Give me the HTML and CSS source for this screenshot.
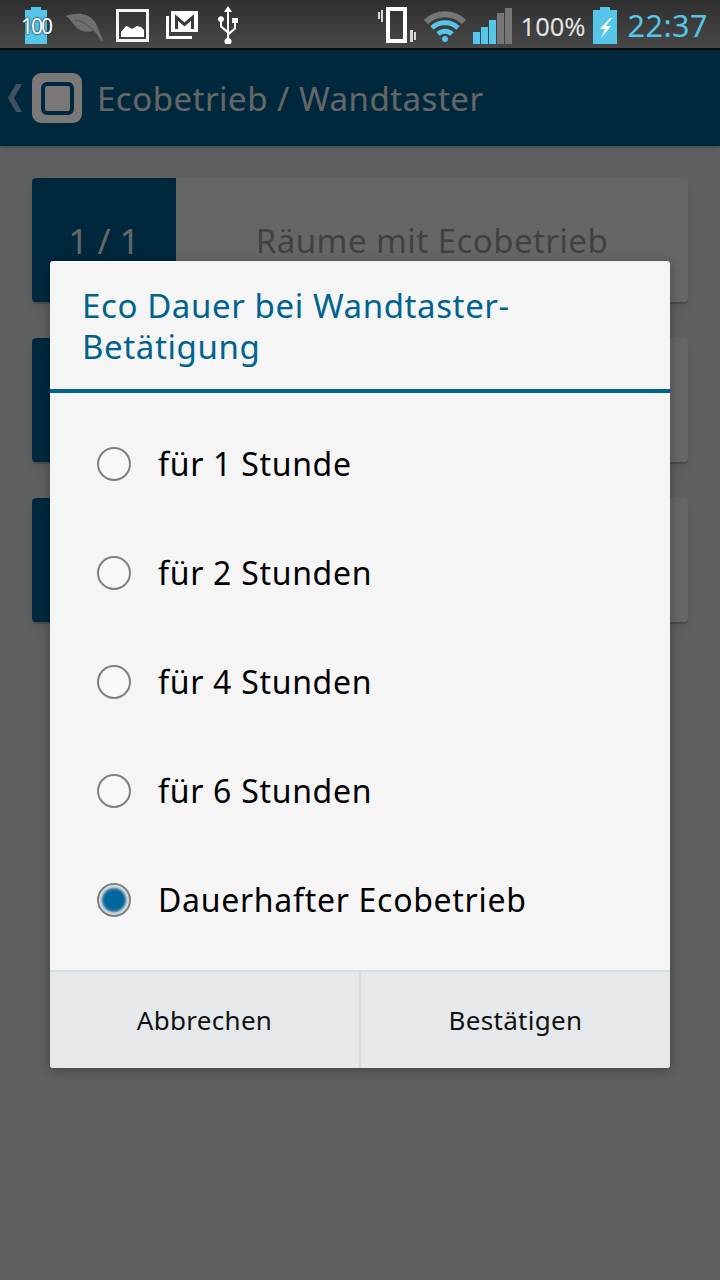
FILE: index.html
```html
<!DOCTYPE html>
<html lang="de">
<head>
    <meta charset="UTF-8">
    <meta name="viewport" content="width=device-width, initial-scale=1.0">
    <title>Ecobetrieb / Wandtaster</title>
    <link rel="stylesheet" href="styles.css">
</head>
<body>
    <div class="status-bar">
        <div class="status-left">
            <svg class="ic-batt100" width="24" height="37" viewBox="0 0 24 37">
                <path d="M7 0h10v3h6v34H1V3h6z" fill="#55c6e8"/>
            </svg>
            <span class="batt-label">100</span>
            <svg class="ic-leaf" width="37" height="28" viewBox="0 0 37 28">
                <path d="M0 3C10-1 23 0 29 9c2 4 4 9 8 18l-2 1c-2-4-4-7-7-10-8 2-15 0-19-5C6 9 4 6 0 3z" fill="#6e6e6e"/>
                <path d="M9 7c7 1 13 5 19 11" fill="none" stroke="#4a4a4a" stroke-width="1"/>
            </svg>
            <svg class="ic-image" width="33" height="33" viewBox="0 0 33 33">
                <rect x="1.500" y="1.500" width="30" height="30" fill="none" stroke="#f4f4f4" stroke-width="3"/>
                <path d="M5 28v-5l5-6 3 1 3 2 5-3 4 1 3 3v7z" fill="#fff"/>
            </svg>
            <svg class="ic-mail" width="33" height="28" viewBox="0 0 33 28">
                <path d="M1 5h3v20h23v3H1z" fill="#fff"/>
                <path d="M6 0h27v21H6z" fill="#fff"/>
                <path d="M11.500 18V6.500l8 7 8-7V18" fill="none" stroke="#3a3a3a" stroke-width="3"/>
            </svg>
            <svg class="ic-usb" width="20" height="38" viewBox="0 0 20 38">
                <path d="M10 0l4 6h-3v20l5-4v-5h-2v-5h6v5h-2v6l-7 6v3a3.500 3.500 0 1 1-2 0v-5l-7-6v-5a3 3 0 1 1 2 0v4l5 4V6H6z" fill="#fff"/>
            </svg>
        </div>
        <div class="status-right">
            <svg class="ic-vibrate" width="38" height="36" viewBox="0 0 38 36">
                <path d="M10 2h17v32H10z" fill="none" stroke="#fff" stroke-width="4"/>
                <path d="M0 5h2v7H0zM3 3h2v12H3zM32 23h3v12h-3zM36 25h2v8h-2z" fill="#d8d8d8"/>
            </svg>
            <svg class="ic-wifi" width="44" height="33" viewBox="0 0 44 33">
                <path d="M3 13a27 27 0 0 1 38 0" fill="none" stroke="#767676" stroke-width="6"/>
                <path d="M9 19a19 19 0 0 1 26 0" fill="none" stroke="#55c6e8" stroke-width="5"/>
                <path d="M15 25a10 10 0 0 1 14 0" fill="none" stroke="#55c6e8" stroke-width="5"/>
                <circle cx="22" cy="30" r="3" fill="#55c6e8"/>
            </svg>
            <div class="signal">
                <i class="bar on b1"></i><i class="bar on b2"></i><i class="bar on b3"></i><i class="bar b4"></i><i class="bar b5"></i>
            </div>
            <span class="percent">100%</span>
            <svg class="ic-batt" width="24" height="37" viewBox="0 0 24 37">
                <path d="M7 0h10v3h7v34H0V3h7z" fill="#55c6e8"/>
                <path d="M17 11L7 22h5l-4 9 10-12h-5l6-8z" fill="#fff"/>
            </svg>
            <span class="clock">22:37</span>
        </div>
    </div>

    <div class="screen">
        <div class="app-header">
            <svg class="back" width="14" height="28" viewBox="0 0 14 28">
                <path d="M14 0L6 14l8 14H8L0 14 8 0z" fill="#96cdf0"/>
            </svg>
            <div class="logo"><div class="logo-inner"></div></div>
            <h1>Ecobetrieb / Wandtaster</h1>
        </div>

        <div class="content">
            <div class="card">
                <div class="card-num">1 / 1</div>
                <div class="card-text">Räume mit Ecobetrieb</div>
            </div>
            <div class="card">
                <div class="card-num"></div>
                <div class="card-text"></div>
            </div>
            <div class="card">
                <div class="card-num"></div>
                <div class="card-text"></div>
            </div>
        </div>

        <div class="overlay"></div>

        <div class="dialog">
            <h2>Eco Dauer bei Wandtaster-<br>Betätigung</h2>
            <div class="options">
                <div class="option"><span class="radio"></span>für 1 Stunde</div>
                <div class="option"><span class="radio"></span>für 2 Stunden</div>
                <div class="option"><span class="radio"></span>für 4 Stunden</div>
                <div class="option"><span class="radio"></span>für 6 Stunden</div>
                <div class="option"><span class="radio checked"></span>Dauerhafter Ecobetrieb</div>
            </div>
            <div class="buttons">
                <button type="button">Abbrechen</button>
                <button type="button">Bestätigen</button>
            </div>
        </div>
    </div>
</body>
</html>
```

FILE: styles.css
```css
* {
    box-sizing: border-box;
}
html, body {
    margin: 0;
    height: 100%;
}
body {
    font-family: 'Noto Sans', 'Open Sans', sans-serif;
    background: #e6f0ee;
    overflow: hidden;
}
.status-bar {
    height: 50px;
    background: linear-gradient(#2f2f2f, #474747);
    border-bottom: 2px solid #0c0c0c;
    display: flex;
    justify-content: space-between;
    align-items: center;
    padding: 2px 12px 0 24px;
    position: relative;
}
.status-left, .status-right {
    display: flex;
    align-items: center;
}
.ic-batt100 {
    margin-right: 18px;
}
.ic-leaf {
    margin-top: 3px;
    margin-right: 13px;
}
.ic-image {
    margin-right: 16px;
}
.ic-mail {
    margin-right: 20px;
}
.batt-label {
    position: absolute;
    left: 20px;
    top: 12px;
    width: 32px;
    text-align: center;
    font-size: 21px;
    letter-spacing: -2px;
    color: #fff;
    text-shadow: 0 0 2px #1c3c48, 0 0 2px #1c3c48;
}
.ic-vibrate {
    margin-right: 7px;
}
.ic-wifi {
    margin-right: 6px;
}
.signal {
    display: flex;
    align-items: flex-end;
    gap: 1px;
    height: 36px;
    margin-top: 2px;
}
.bar {
    width: 7px;
    background: #767676;
}
.bar.on {
    background: #55c6e8;
}
.b1 { height: 12px; }
.b2 { height: 17px; }
.b3 { height: 24px; }
.b4 { height: 31px; }
.b5 { height: 36px; }
.percent {
    color: #e4e4e4;
    font-size: 25.500px;
    margin-left: 9px;
    margin-right: 7px;
    position: relative;
    top: 1px;
}
.clock {
    color: #55c6e8;
    font-size: 30.500px;
    margin-left: 11px;
    letter-spacing: 0.5px;
}
.screen {
    position: relative;
    height: 1230px;
}
.app-header {
    height: 96px;
    background: #00659a;
    box-shadow: 0 1px 3px rgba(0,0,0,0.3);
    display: flex;
    align-items: center;
    padding-left: 8px;
}
/* the logo stays lighter than the dim layer would make it */
.logo {
    width: 50px;
    height: 50px;
    margin-left: 10px;
    background: #7b7977;
    border-radius: 9px;
    display: flex;
    align-items: center;
    justify-content: center;
    position: relative;
    z-index: 1;
}
.logo-inner {
    width: 33px;
    height: 33px;
    background: #7b7977;
    border: 4px solid #002840;
    border-radius: 6px;
}
.app-header h1 {
    margin: 0 0 0 15px;
    font-size: 33px;
    font-weight: 400;
    letter-spacing: 0.500px;
    color: #fff;
}
.content {
    padding: 32px 32px 0;
    display: flex;
    flex-direction: column;
    gap: 36px;
}
.card {
    height: 124px;
    display: flex;
    background: #fff;
    border-radius: 4px;
    box-shadow: 0 2px 0 rgba(0,0,0,0.18), 0 6px 14px rgba(0,0,0,0.06);
    overflow: hidden;
}
.card-num {
    width: 144px;
    background: #00659a;
    color: #fff;
    font-size: 35px;
    display: flex;
    align-items: center;
    justify-content: center;
}
.card-text {
    flex: 1;
    color: #a4a4a4;
    font-size: 33px;
    letter-spacing: 0.450px;
    display: flex;
    align-items: center;
    justify-content: center;
}
.overlay {
    position: absolute;
    inset: 0;
    background: rgba(0,0,0,0.6);
}
.dialog {
    position: absolute;
    z-index: 2;
    left: 50px;
    top: 211px;
    width: 620px;
    height: 807px;
    background: #f5f5f6;
    border-radius: 3px;
    box-shadow: 0 2px 12px rgba(0,0,0,0.3);
    overflow: hidden;
    display: flex;
    flex-direction: column;
}
.dialog h2 {
    margin: 0;
    height: 132px;
    padding: 24px 32px 0;
    font-size: 33px;
    line-height: 41px;
    letter-spacing: 0.600px;
    font-weight: 400;
    color: #00628f;
    border-bottom: 4px solid #00628f;
}
.options {
    flex: 1;
    padding-top: 16px;
}
.option {
    height: 109px;
    display: flex;
    align-items: center;
    padding-left: 47px;
    font-size: 32px;
    letter-spacing: 0.700px;
    color: #000;
}
.radio {
    width: 34px;
    height: 34px;
    margin-right: 27px;
    border-radius: 50%;
    border: 2px solid #808080;
    background: #f8f8f8;
    display: block;
}
.radio.checked {
    background: radial-gradient(circle, #00659a 0, #00659a 9px, #3f7fa5 11px, #b8ccd8 13px, #e4ebef 15px);
}
.buttons {
    height: 98px;
    display: flex;
    border-top: 2px solid #dcdfe0;
}
.buttons button {
    flex: 1;
    border: none;
    background: #e6e9eb;
    font-family: inherit;
    font-size: 26px;
    letter-spacing: 0.300px;
    color: #111;
    padding: 0;
}
.buttons button + button {
    border-left: 2px solid #d8dbdd;
}
```
